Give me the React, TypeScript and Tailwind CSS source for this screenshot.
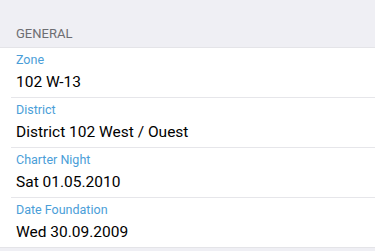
export default function App() {
  const rows = [
    { label: "Zone", value: "102 W-13" },
    { label: "District", value: "District 102 West / Ouest" },
    { label: "Charter Night", value: "Sat 01.05.2010" },
    { label: "Date Foundation", value: "Wed 30.09.2009" },
  ];
  return (
    <div
      className="w-[375px] h-[251px] bg-[#efeff4] overflow-hidden"
      style={{ fontFamily: "Roboto, 'Noto Sans', sans-serif" }}
    >
      <div className="pt-[26px] pb-[5px] px-[16px] text-[13px] leading-[16px] text-[#6d6d72] uppercase">
        General
      </div>
      <div className="bg-white border-t border-b border-[#e4e4e8]">
        {rows.map((r, i) => (
          <div key={r.label} className="pl-[11px]">
            <div
              className={
                (i < rows.length - 1 ? "h-[50px] border-b border-[#e6e6ea] " : "h-[49px] ") +
                "pl-[5px] pt-[4px]"
              }
            >
              <div className="text-[12.5px] leading-[16px] text-[#4a9ed8]">{r.label}</div>
              <div className="mt-[2px] text-[15.5px] leading-[24px] text-black">{r.value}</div>
            </div>
          </div>
        ))}
      </div>
    </div>
  );
}
